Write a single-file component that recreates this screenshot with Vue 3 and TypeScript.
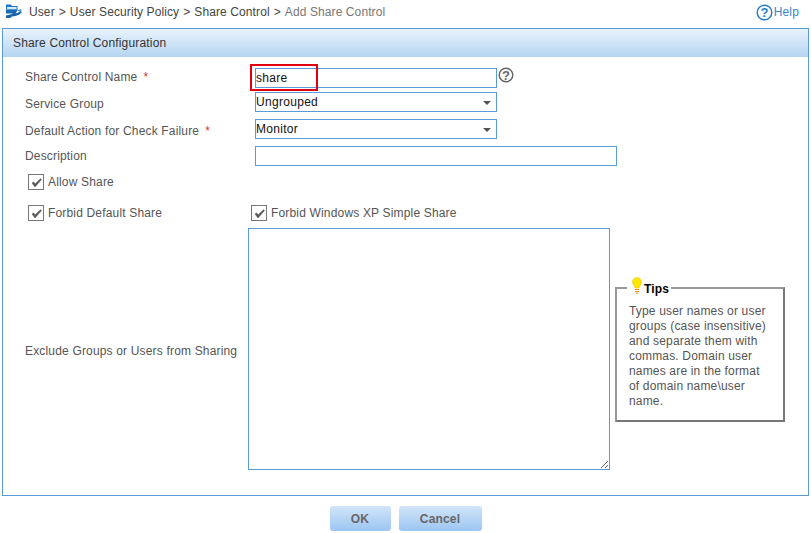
<script setup lang="ts">
import { ref } from 'vue'

const name = ref('share')
const description = ref('')
const exclude = ref('')
const group = ref('Ungrouped')
const action = ref('Monitor')
const allowShare = ref(true)
const forbidDefault = ref(true)
const forbidXp = ref(true)
</script>

<template>
  <div class="page">
    <header class="crumbs">
      <svg class="crumb-icon" width="18" height="18" viewBox="0 0 18 18">
        <path d="M1 1.500h5l1 1.500h5.500v3.500H1z" fill="#1f78c8" />
        <path d="M2 4h9.500v2H2z" fill="#d6e8f8" />
        <path d="M1 6.500h12L10.500 10.500H1z" fill="#1b6cb8" />
        <path d="M1 12.500l6-1.500 2-2 2.500-.5-1 2 3-1 2-1.500 1.500 1-2.500 2.500-4 1.500-3.500.5-2 1.500H1z" fill="#1a62aa" />
        <path d="M12.500 7.500l3-1.500 1.500 1-2.500 1.500z" fill="#3f93dc" />
      </svg>
      <nav class="trail">
        <span>User</span><i>&gt;</i>
        <span>User Security Policy</span><i>&gt;</i>
        <span>Share Control</span><i>&gt;</i>
        <span class="current">Add Share Control</span>
      </nav>
      <a class="help">
        <svg width="17" height="17" viewBox="0 0 17 17">
          <circle cx="8.500" cy="8.500" r="7.300" fill="none" stroke="#2b7fc4" stroke-width="1.500" />
          <text x="8.500" y="13" text-anchor="middle" class="qmark" fill="#2b7fc4">?</text>
        </svg>
        <span>Help</span>
      </a>
    </header>

    <section class="panel">
      <h2 class="panel-title">Share Control Configuration</h2>
      <div class="form">
        <div class="row row-name">
          <label class="label label-up">Share Control Name<b>*</b></label>
          <div class="name-field">
            <input v-model="name" class="field short" type="text" />
            <span class="highlight"></span>
          </div>
          <svg class="hint" width="16" height="16" viewBox="0 0 16 16">
            <circle cx="8" cy="8" r="6.800" fill="none" stroke="#666" stroke-width="1.500" />
            <text x="8" y="12.500" text-anchor="middle" class="qmark" fill="#666">?</text>
          </svg>
        </div>
        <div class="row row-group">
          <label class="label label-down">Service Group</label>
          <div class="select-wrap">
            <select v-model="group" class="field short select">
              <option>Ungrouped</option>
            </select>
          </div>
        </div>
        <div class="row row-action">
          <label class="label label-down">Default Action for Check Failure<b>*</b></label>
          <div class="select-wrap">
            <select v-model="action" class="field short select">
              <option>Monitor</option>
            </select>
          </div>
        </div>
        <div class="row row-desc">
          <label class="label">Description</label>
          <input v-model="description" class="field long" type="text" />
        </div>

        <label class="check check-allow">
          <input v-model="allowShare" type="checkbox" />
          <span class="box"><svg width="13" height="13" viewBox="0 0 13 13"><path d="M2 7l3 4 6.500-7.500-1-.8-5.200 5L3.500 6z" fill="#555" stroke="#555" stroke-width=".5" /></svg></span>
          Allow Share
        </label>

        <div class="check-row">
          <label class="check check-default">
            <input v-model="forbidDefault" type="checkbox" />
            <span class="box"><svg width="13" height="13" viewBox="0 0 13 13"><path d="M2 7l3 4 6.500-7.500-1-.8-5.200 5L3.500 6z" fill="#555" stroke="#555" stroke-width=".5" /></svg></span>
            Forbid Default Share
          </label>
          <label class="check">
            <input v-model="forbidXp" type="checkbox" />
            <span class="box"><svg width="13" height="13" viewBox="0 0 13 13"><path d="M2 7l3 4 6.500-7.500-1-.8-5.200 5L3.500 6z" fill="#555" stroke="#555" stroke-width=".5" /></svg></span>
            Forbid Windows XP Simple Share
          </label>
        </div>

        <div class="exclude">
          <label class="label exclude-label">Exclude Groups or Users from Sharing</label>
          <textarea v-model="exclude" class="field area"></textarea>
          <fieldset class="tips">
            <legend>
              <svg width="10" height="17" viewBox="0 0 10 17">
                <path d="M5 .5a4.500 4.500 0 0 0-4.500 4.500c0 2.300 2 3.500 2.500 6h4c.5-2.500 2.500-3.700 2.500-6A4.500 4.500 0 0 0 5 .5z" fill="#ffe600" stroke="#f2c200" stroke-width=".6" />
                <path d="M2.800 12.500h4.400M3 14.500h4M3.800 16.300h2.400" stroke="#f08a00" stroke-width="1.100" fill="none" />
              </svg>
              <span>Tips</span>
            </legend>
            <p>Type user names or user groups (case insensitive) and separate them with commas. Domain user names are in the format of domain name\user name.</p>
          </fieldset>
        </div>
      </div>
    </section>

    <footer class="actions">
      <button class="btn ok" type="button">OK</button>
      <button class="btn cancel" type="button">Cancel</button>
    </footer>
  </div>
</template>

<style>
html, body { margin: 0; background: #fff; }
</style>

<style scoped>
.page {
  width: 811px;
  height: 533px;
  overflow: hidden;
  font: 12px/15px "Liberation Sans", Arial, sans-serif;
  letter-spacing: .17px;
  color: #555;
  background: #fff;
}
.crumbs {
  height: 28px;
  display: flex;
  align-items: center;
  padding: 0 8px 4px 5px;
  box-sizing: border-box;
}
.crumb-icon { margin-right: 6px; margin-top: -1px; }
.trail { flex: 1; color: #444; display: flex; gap: 4px; letter-spacing: .1px; }
.trail i { font-style: normal; }
.current { color: #777; }
.help { display: flex; align-items: center; gap: 1px; color: #3a86c8; margin-right: 4px; }
.qmark { font: bold 13px "Liberation Sans", Arial, sans-serif; }
.panel {
  margin: 0 2px;
  height: 468px;
  box-sizing: border-box;
  border: 1px solid #5b9bd5;
}
.panel-title {
  margin: 0;
  height: 28px;
  padding-left: 10px;
  font-size: 12px;
  font-weight: normal;
  line-height: 28px;
  color: #333;
  background: linear-gradient(#e9f3fd, #b5d4f2);
}
.form { padding: 11px 0 0 22px; }
.row { display: flex; align-items: center; height: 20px; }
.row-group { margin-top: 4px; }
.row-action, .row-desc { margin-top: 7px; }
.label { width: 230px; flex: none; }
.label-up { margin-bottom: 2px; }
.label-down { margin-top: 4px; }
.label b { font-weight: normal; color: #d33; margin-left: 6px; }
.field {
  box-sizing: border-box;
  border: 1px solid #5b9bd5;
  border-radius: 0;
  background: #fff;
  outline: none;
  font: 12px "Liberation Sans", Arial, sans-serif;
  letter-spacing: .3px;
  color: #111;
  padding: 0;
  margin: 0;
}
.short { width: 242px; height: 20px; }
.long { width: 362px; height: 20px; }
.name-field { position: relative; display: flex; }
.highlight {
  position: absolute;
  left: -5px;
  top: -4px;
  width: 68px;
  height: 27px;
  box-sizing: border-box;
  border: 2px solid #e0000f;
  pointer-events: none;
}
.hint { margin: -6px 0 0 1px; }
.select-wrap { position: relative; display: flex; }
.select { appearance: none; }
.select-wrap::after {
  content: "";
  position: absolute;
  right: 6px;
  top: 9px;
  border-left: 4px solid transparent;
  border-right: 4px solid transparent;
  border-top: 4px solid #555;
  pointer-events: none;
}
.check { display: inline-flex; align-items: center; gap: 4px; height: 16px; }
.check input { position: absolute; opacity: 0; width: 0; height: 0; margin: 0; }
.box {
  width: 16px;
  height: 16px;
  box-sizing: border-box;
  border: 1px solid #777;
  display: flex;
  align-items: flex-end;
  justify-content: center;
  background: #fff;
}
.check-allow { display: flex; margin: 8px 0 0 3px; }
.check-row { display: flex; margin: 15px 0 0 3px; }
.check-default { width: 223px; }
.exclude {
  display: flex;
  align-items: flex-start;
  margin-top: 7px;
}
.exclude-label { width: 223px; align-self: center; margin-top: 4px; }
.area {
  width: 362px;
  height: 242px;
  resize: both;
  display: block;
}
.tips {
  width: 170px;
  height: 145px;
  margin: 49px 0 0 5px;
  box-sizing: border-box;
  border: 2px solid;
  border-color: #999 #777 #777 #999;
  padding: 0 0 0 12px;
  min-width: 0;
}
.tips legend {
  padding: 0 2px 0 5px;
  margin-left: -2px;
  display: flex;
  align-items: flex-start;
  gap: 2px;
  height: 22px;
  color: #000;
  font-weight: bold;
}
.tips legend span { margin-top: 5px; }
.tips p { margin: 5px 0 0; width: 142px; }
.actions { display: flex; justify-content: center; gap: 8px; padding-top: 10px; }
.btn {
  height: 25px;
  border: 0;
  border-radius: 3px;
  padding: 0;
  background: linear-gradient(#d2e4f8, #9cc6f3);
  color: #666;
  font: bold 12px "Liberation Sans", Arial, sans-serif;
  letter-spacing: .17px;
}
.ok { width: 61px; }
.cancel { width: 83px; }
</style>
